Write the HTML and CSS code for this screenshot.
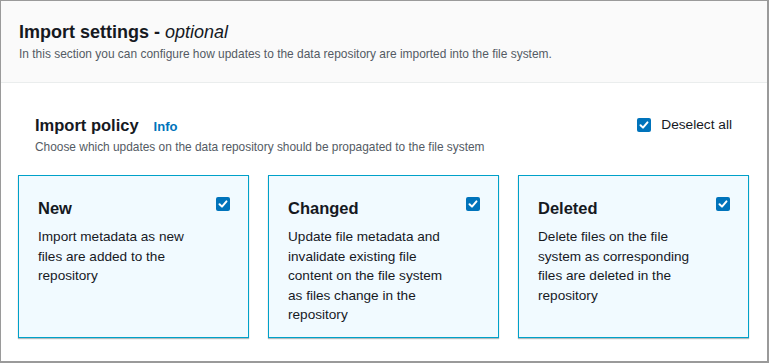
FILE: index.html
```html
<!DOCTYPE html>
<html lang="en">
<head>
  <meta charset="UTF-8" />
  <title>Import settings</title>
  <link rel="stylesheet" href="styles.css">
</head>
<body>
  <!-- Import settings container -->
  <div class="container">
    <div class="container-header">
      <h2>Import settings - <em>optional</em></h2>
      <p>In this section you can configure how updates to the data repository are imported into the file system.</p>
    </div>

    <div class="container-body">
      <div class="policy-head">
        <div>
          <div class="policy-title">
            <h3>Import policy</h3>
            <a href="#" class="info-link">Info</a>
          </div>
          <p class="policy-desc">Choose which updates on the data repository should be propagated to the file system</p>
        </div>
        <label class="deselect">
          <span class="checkbox"><svg viewBox="0 0 14 14"><polyline points="3.5,7.2 6,9.6 10.5,4.4" /></svg></span>
          Deselect all
        </label>
      </div>

      <div class="tiles">
        <div class="tile">
          <div class="tile-top">
            <h4>New</h4>
            <span class="checkbox"><svg viewBox="0 0 14 14"><polyline points="3.5,7.2 6,9.6 10.5,4.4" /></svg></span>
          </div>
          <p>Import metadata as new files are added to the repository</p>
        </div>
        <div class="tile">
          <div class="tile-top">
            <h4>Changed</h4>
            <span class="checkbox"><svg viewBox="0 0 14 14"><polyline points="3.5,7.2 6,9.6 10.5,4.4" /></svg></span>
          </div>
          <p>Update file metadata and invalidate existing file content on the file system as files change in the repository</p>
        </div>
        <div class="tile">
          <div class="tile-top">
            <h4>Deleted</h4>
            <span class="checkbox"><svg viewBox="0 0 14 14"><polyline points="3.5,7.2 6,9.6 10.5,4.4" /></svg></span>
          </div>
          <p>Delete files on the file system as corresponding files are deleted in the repository</p>
        </div>
      </div>
    </div>
  </div>
</body>
</html>
```

FILE: styles.css
```css
/* Global */
* { box-sizing: border-box; margin: 0; padding: 0; }
body {
  font-family: "Liberation Sans", Arial, sans-serif;
  color: #16191f;
  background: #fff;
}
/* Outer container */
.container {
  width: 769px;
  height: 363px;
  border: 1px solid #9a9a9a;
  border-right-width: 2px;
  border-bottom-width: 2px;
  overflow: hidden;
}
.container-header {
  background-color: #fafafa;
  border-bottom: 1px solid #eaeded;
  height: 82px;
  padding: 20px 18px 0;
}
.container-header h2 {
  font-size: 18px;
  font-weight: 700;
  line-height: 22px;
}
.container-header h2 em { font-weight: 400; }
.container-header p {
  font-size: 11.95px;
  line-height: 18px;
  color: #545b64;
  margin-top: 2px;
}
/* Body */
.container-body {
  padding: 31px 18px 0 17px;
}
.policy-head {
  display: flex;
  justify-content: space-between;
  align-items: flex-start;
  padding: 0 16px 0 17px;
}
.policy-title {
  display: flex;
  align-items: baseline;
  gap: 15px;
}
.policy-title h3 {
  font-size: 16.5px;
  line-height: 22px;
  font-weight: 700;
}
.info-link {
  color: #0073bb;
  font-size: 13px;
  font-weight: 700;
  text-decoration: none;
}
.policy-desc {
  font-size: 11.9px;
  line-height: 16px;
  color: #545b64;
  margin-top: 3px;
}
.deselect {
  display: flex;
  align-items: center;
  gap: 10px;
  font-size: 13.7px;
  margin-top: 3px;
  margin-right: 1px;
}
/* Checkbox */
.checkbox {
  display: inline-block;
  width: 14px;
  height: 14px;
  background-color: #0073bb;
  border-radius: 2px;
  flex: none;
}
.checkbox svg {
  display: block;
  width: 14px;
  height: 14px;
}
.checkbox polyline {
  fill: none;
  stroke: #fff;
  stroke-width: 2;
  stroke-linecap: round;
  stroke-linejoin: round;
}
/* Tiles */
.tiles {
  display: flex;
  gap: 19px;
  margin-top: 20px;
}
.tile {
  width: 231px;
  height: 163px;
  background-color: #f1faff;
  border: 1px solid #00a1c9;
  box-shadow: 0 1px 1px rgba(0, 28, 36, 0.3);
  padding: 20px 18px 0 19px;
}
.tile-top {
  display: flex;
  justify-content: space-between;
  align-items: flex-start;
}
.tile-top h4 {
  font-size: 16.5px;
  font-weight: 700;
  line-height: 22px;
  margin-top: 1px;
}
.tile-top .checkbox { margin-top: 1px; }
.tile p {
  font-size: 13.6px;
  line-height: 19.5px;
  margin-top: 8px;
  padding-right: 24px;
}
```
